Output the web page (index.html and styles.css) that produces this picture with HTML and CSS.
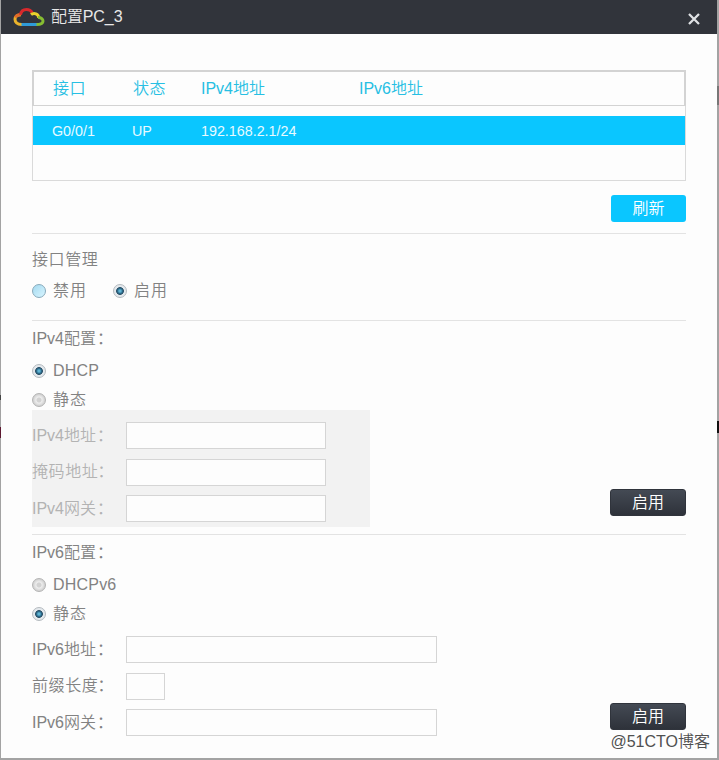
FILE: index.html
```html
<!DOCTYPE html>
<html lang="zh-CN">
<head>
<meta charset="utf-8">
<title>配置PC_3</title>
<link rel="stylesheet" href="styles.css">
</head>
<body>
<div class="window">
  <header class="titlebar">
    <svg class="logo" viewBox="0 0 32 20" width="32" height="20" fill="none" stroke-width="3">
      <path d="M8 17.500H24" stroke="#2f9bd8"/>
      <path d="M8.500 17.500C4 17.500 2 15 2 12.300C2 9.500 4.500 7.500 8 7.700" stroke="#e9b32c"/>
      <path d="M2.300 10.500C3 8.500 5 7.500 8 7.700" stroke="#e06a28"/>
      <path d="M7.500 7.700C8 4.500 10.500 2.500 13.500 2.500C16 2.500 18 3.500 19.300 5.700" stroke="#d9292c"/>
      <path d="M18 7.700C21 5 25.500 7 25.800 10.800" stroke="#e9d22c"/>
      <path d="M25 10.600C28 10.400 30 12 30 14C30 16.200 28 17.500 23.500 17.500" stroke="#86bd32"/>
    </svg>
    <h1 class="title">配置PC_3</h1>
    <svg class="close" viewBox="0 0 12 12" width="12" height="12"><path d="M1 1L11 11M11 1L1 11" stroke="#dfe1e4" stroke-width="2.300"/></svg>
  </header>
  <main class="content">
    <div class="table">
      <div class="row head"><span class="wide">接口</span><span class="wide">状态</span><span>IPv4地址</span><span>IPv6地址</span></div>
      <div class="row selected"><span>G0/0/1</span><span>UP</span><span>192.168.2.1/24</span><span></span></div>
    </div>
    <div class="toolbar"><button class="btn refresh">刷新</button></div>

    <section class="section manage">
      <h2 class="heading wide">接口管理</h2>
      <div class="choices">
        <label class="choice"><i class="radio hover"></i><span class="wide">禁用</span></label>
        <label class="choice"><i class="radio on"></i><span class="wide">启用</span></label>
      </div>
    </section>

    <section class="section ipv4">
      <h2 class="heading">IPv4配置<b class="colon">：</b></h2>
      <label class="choice dhcp"><i class="radio on"></i><span>DHCP</span></label>
      <label class="choice static"><i class="radio"></i><span class="wide">静态</span></label>
      <div class="split">
        <div class="fields disabled">
          <div class="field"><span class="label">IPv4地址<b class="colon">：</b></span><span class="input"></span></div>
          <div class="field"><span class="label wide">掩码地址<b class="colon">：</b></span><span class="input"></span></div>
          <div class="field"><span class="label">IPv4网关<b class="colon">：</b></span><span class="input"></span></div>
        </div>
        <button class="btn apply">启用</button>
      </div>
    </section>

    <section class="section ipv6">
      <h2 class="heading">IPv6配置<b class="colon">：</b></h2>
      <label class="choice dhcp"><i class="radio"></i><span>DHCPv6</span></label>
      <label class="choice static"><i class="radio on"></i><span class="wide">静态</span></label>
      <div class="split">
        <div class="fields">
          <div class="field"><span class="label">IPv6地址<b class="colon">：</b></span><span class="input long"></span></div>
          <div class="field"><span class="label wide">前缀长度<b class="colon">：</b></span><span class="input short"></span></div>
          <div class="field"><span class="label">IPv6网关<b class="colon">：</b></span><span class="input long"></span></div>
        </div>
        <button class="btn apply">启用</button>
      </div>
    </section>
  </main>
</div>
<div class="watermark">@51CTO博客</div>
</body>
</html>
```
FILE: styles.css
```css
* { box-sizing: border-box; }

body {
  margin: 0;
  width: 719px;
  height: 760px;
  padding: 0 2px 2px 1px;
  overflow: hidden;
  background:
    linear-gradient(#111, #111) 100% 421px / 2px 12px no-repeat,
    linear-gradient(#5c1830, #5c1830) 0 427px / 1px 11px no-repeat,
    linear-gradient(#444, #444) 0 395px / 1px 5px no-repeat,
    linear-gradient(#777, #777) 100% 86px / 2px 19px no-repeat,
    #a3a3a3;
  font: 350 16px/20px "Liberation Sans", "Noto Sans CJK SC", sans-serif;
  color: #828282;
}

.window { height: 758px; background: #fdfdfd; }

.titlebar {
  display: flex;
  align-items: center;
  height: 34px;
  padding: 0 17px 0 12px;
  background: #31343b;
}
.logo { margin-top: -1px; }
.title {
  flex: 1;
  margin: 0 0 0 6px;
  font-size: 16px;
  font-weight: 350;
  letter-spacing: -0.1px;
  color: #e8e8e8;
}
.close { margin-top: 3px; }

.content { padding: 36px 31px 0; }
.wide { letter-spacing: 0.6px; }

.table { height: 111px; border: 1px solid #dadada; }
.row { display: grid; grid-template-columns: 80px 68px 158px 1fr; align-items: center; }
.head {
  height: 36px;
  margin: -1px -1px 0;
  padding-left: 19px;
  border: 2px solid #d3d3d3;
  border-bottom-width: 1px;
  color: #27bfe3;
}
.selected {
  height: 29px;
  margin-top: 10px;
  padding-left: 19px;
  background: #0ac6ff;
  color: #e8faff;
  font-size: 14.3px;
  grid-template-columns: 80px 69px 158px 1fr;
}

.toolbar { display: flex; justify-content: flex-end; height: 52px; padding-top: 14px; }
.btn {
  height: 27px;
  padding: 0;
  border: 0;
  border-radius: 3px;
  font: inherit;
  color: #fff;
}
.refresh { width: 75px; background: #0ac6ff; }
.apply {
  width: 76px;
  margin-bottom: 10.6px;
  background: linear-gradient(#444a54, #2e323a);
  border: 1px solid #30343c;
}

.section { border-top: 1px solid #e3e3e3; }
.manage { height: 87px; padding-top: 16px; }
.ipv4 { height: 214px; padding-top: 8px; }
.ipv6 { padding-top: 8px; }
.heading { margin: 0; height: 20px; font-size: 16px; line-height: 20px; font-weight: 350; }
.colon { margin-left: 1px; font-weight: 400; }
.wide .colon { margin-left: -1px; }

.choices { display: flex; gap: 26px; margin-top: 11px; }
.choice { display: flex; align-items: center; gap: 7px; height: 20px; }
.choice .wide { letter-spacing: 1px; }
.dhcp { margin-top: 12px; }
.dhcp span { letter-spacing: 0.2px; }
.static { margin-top: 9px; }

.radio {
  width: 14px;
  height: 14px;
  border: 1px solid #b4b4b4;
  border-radius: 50%;
  background: radial-gradient(circle, #d2d2d2 0 2px, #ededed 3px, #d0d0d0 6px);
}
.radio.hover {
  border-color: #88aabb;
  background: linear-gradient(135deg, #a5daf0, #d8f5ff);
}
.radio.on {
  border-color: #b4babf;
  background: radial-gradient(circle at 50% 50%, #5fb4d4 0 1px, #2a6a8a 2.500px, #2b4f66 3.500px, #e4e9ed 4.300px);
}

.split { display: flex; justify-content: space-between; align-items: flex-end; }
.fields { width: 420px; height: 117px; padding-top: 12px; display: flex; flex-direction: column; gap: 9.5px; }
.disabled { width: 338px; background: #f2f2f2; color: #b3b3b3; }
.field { display: flex; align-items: center; height: 27px; }
.label { flex: none; width: 94px; white-space: nowrap; }
.input { flex: none; width: 200px; height: 27px; border: 1px solid #d5d5d5; background: #fdfdfd; }
.input.long { width: 311px; }
.input.short { width: 39px; }

.watermark {
  position: absolute;
  right: 9px;
  top: 732px;
  font-size: 16px;
  color: #505050;
  text-shadow: -1px -1px 0 #fff;
}
```
